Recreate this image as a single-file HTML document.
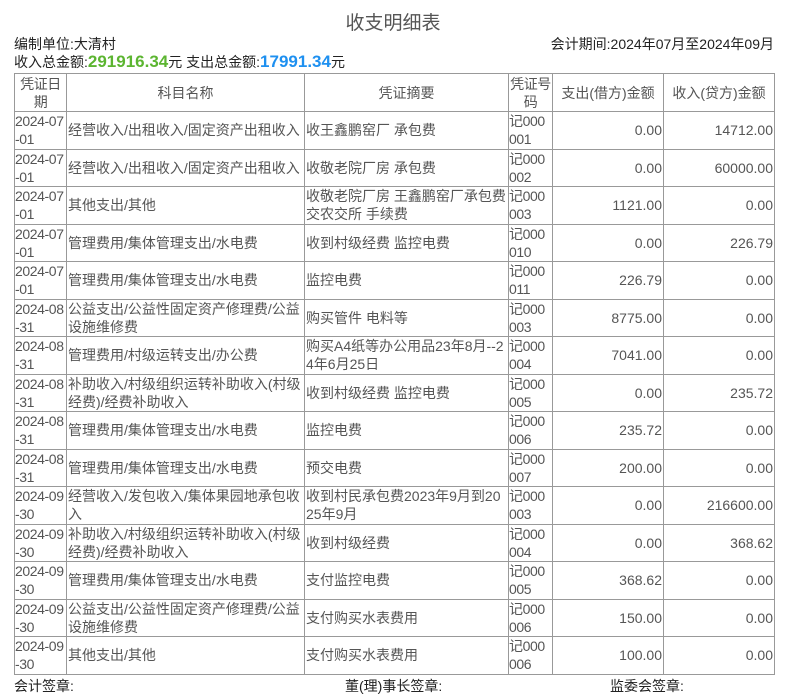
<!DOCTYPE html>
<html><head><meta charset="utf-8"><style>
body{margin:0;width:786px;height:700px;background:#fff;font-family:"Liberation Sans","Noto Sans CJK SC",sans-serif;color:#222;font-size:14px;overflow:hidden}
.t{position:absolute;top:8px;left:0;width:786px;text-align:center;font-size:19px;color:#555}
.a{position:absolute;top:34px;left:14px}
.b{position:absolute;top:34px;right:12px}
.c{position:absolute;top:52px;left:14px}
.g{color:#5cb531;font-weight:bold;font-size:17px}
.bl{color:#1e90f0;font-weight:bold;font-size:17px}
table{position:absolute;top:73px;left:14px;width:761px;border-collapse:collapse;table-layout:fixed;color:#555}
td{border:1px solid #999;padding:0 1px;line-height:18px;height:36.5px;vertical-align:middle;word-break:break-all;overflow:hidden}
td:first-child,td:nth-child(4){padding:0;letter-spacing:-0.4px}
thead td{text-align:center;height:37px}
td.r{text-align:right}
.f{position:absolute;top:676px;font-size:14px}
</style></head><body>
<div class="t">收支明细表</div>
<div class="a">编制单位:大清村</div>
<div class="b">会计期间:2024年07月至2024年09月</div>
<div class="c">收入总金额:<span class="g">291916.34</span>元 支出总金额:<span class="bl">17991.34</span>元</div>
<table>
<colgroup><col style="width:52px"><col style="width:238px"><col style="width:204px"><col style="width:44px"><col style="width:111px"><col style="width:111px"></colgroup>
<thead><tr><td>凭证日期</td><td>科目名称</td><td>凭证摘要</td><td>凭证号码</td><td>支出(借方)金额</td><td>收入(贷方)金额</td></tr></thead>
<tbody>
<tr><td>2024-07-01</td><td>经营收入/出租收入/固定资产出租收入</td><td>收王鑫鹏窑厂 承包费</td><td>记000001</td><td class="r">0.00</td><td class="r">14712.00</td></tr>
<tr><td>2024-07-01</td><td>经营收入/出租收入/固定资产出租收入</td><td>收敬老院厂房 承包费</td><td>记000002</td><td class="r">0.00</td><td class="r">60000.00</td></tr>
<tr><td>2024-07-01</td><td>其他支出/其他</td><td>收敬老院厂房 王鑫鹏窑厂承包费交农交所 手续费</td><td>记000003</td><td class="r">1121.00</td><td class="r">0.00</td></tr>
<tr><td>2024-07-01</td><td>管理费用/集体管理支出/水电费</td><td>收到村级经费 监控电费</td><td>记000010</td><td class="r">0.00</td><td class="r">226.79</td></tr>
<tr><td>2024-07-01</td><td>管理费用/集体管理支出/水电费</td><td>监控电费</td><td>记000011</td><td class="r">226.79</td><td class="r">0.00</td></tr>
<tr><td>2024-08-31</td><td>公益支出/公益性固定资产修理费/公益设施维修费</td><td>购买管件 电料等</td><td>记000003</td><td class="r">8775.00</td><td class="r">0.00</td></tr>
<tr><td>2024-08-31</td><td>管理费用/村级运转支出/办公费</td><td>购买A4纸等办公用品23年8月--24年6月25日</td><td>记000004</td><td class="r">7041.00</td><td class="r">0.00</td></tr>
<tr><td>2024-08-31</td><td>补助收入/村级组织运转补助收入(村级经费)/经费补助收入</td><td>收到村级经费 监控电费</td><td>记000005</td><td class="r">0.00</td><td class="r">235.72</td></tr>
<tr><td>2024-08-31</td><td>管理费用/集体管理支出/水电费</td><td>监控电费</td><td>记000006</td><td class="r">235.72</td><td class="r">0.00</td></tr>
<tr><td>2024-08-31</td><td>管理费用/集体管理支出/水电费</td><td>预交电费</td><td>记000007</td><td class="r">200.00</td><td class="r">0.00</td></tr>
<tr><td>2024-09-30</td><td>经营收入/发包收入/集体果园地承包收入</td><td>收到村民承包费2023年9月到2025年9月</td><td>记000003</td><td class="r">0.00</td><td class="r">216600.00</td></tr>
<tr><td>2024-09-30</td><td>补助收入/村级组织运转补助收入(村级经费)/经费补助收入</td><td>收到村级经费</td><td>记000004</td><td class="r">0.00</td><td class="r">368.62</td></tr>
<tr><td>2024-09-30</td><td>管理费用/集体管理支出/水电费</td><td>支付监控电费</td><td>记000005</td><td class="r">368.62</td><td class="r">0.00</td></tr>
<tr><td>2024-09-30</td><td>公益支出/公益性固定资产修理费/公益设施维修费</td><td>支付购买水表费用</td><td>记000006</td><td class="r">150.00</td><td class="r">0.00</td></tr>
<tr><td>2024-09-30</td><td>其他支出/其他</td><td>支付购买水表费用</td><td>记000006</td><td class="r">100.00</td><td class="r">0.00</td></tr>
</tbody></table>
<div class="f" style="left:14px">会计签章:</div>
<div class="f" style="left:345px">董(理)事长签章:</div>
<div class="f" style="left:610px">监委会签章:</div>
</body></html>
